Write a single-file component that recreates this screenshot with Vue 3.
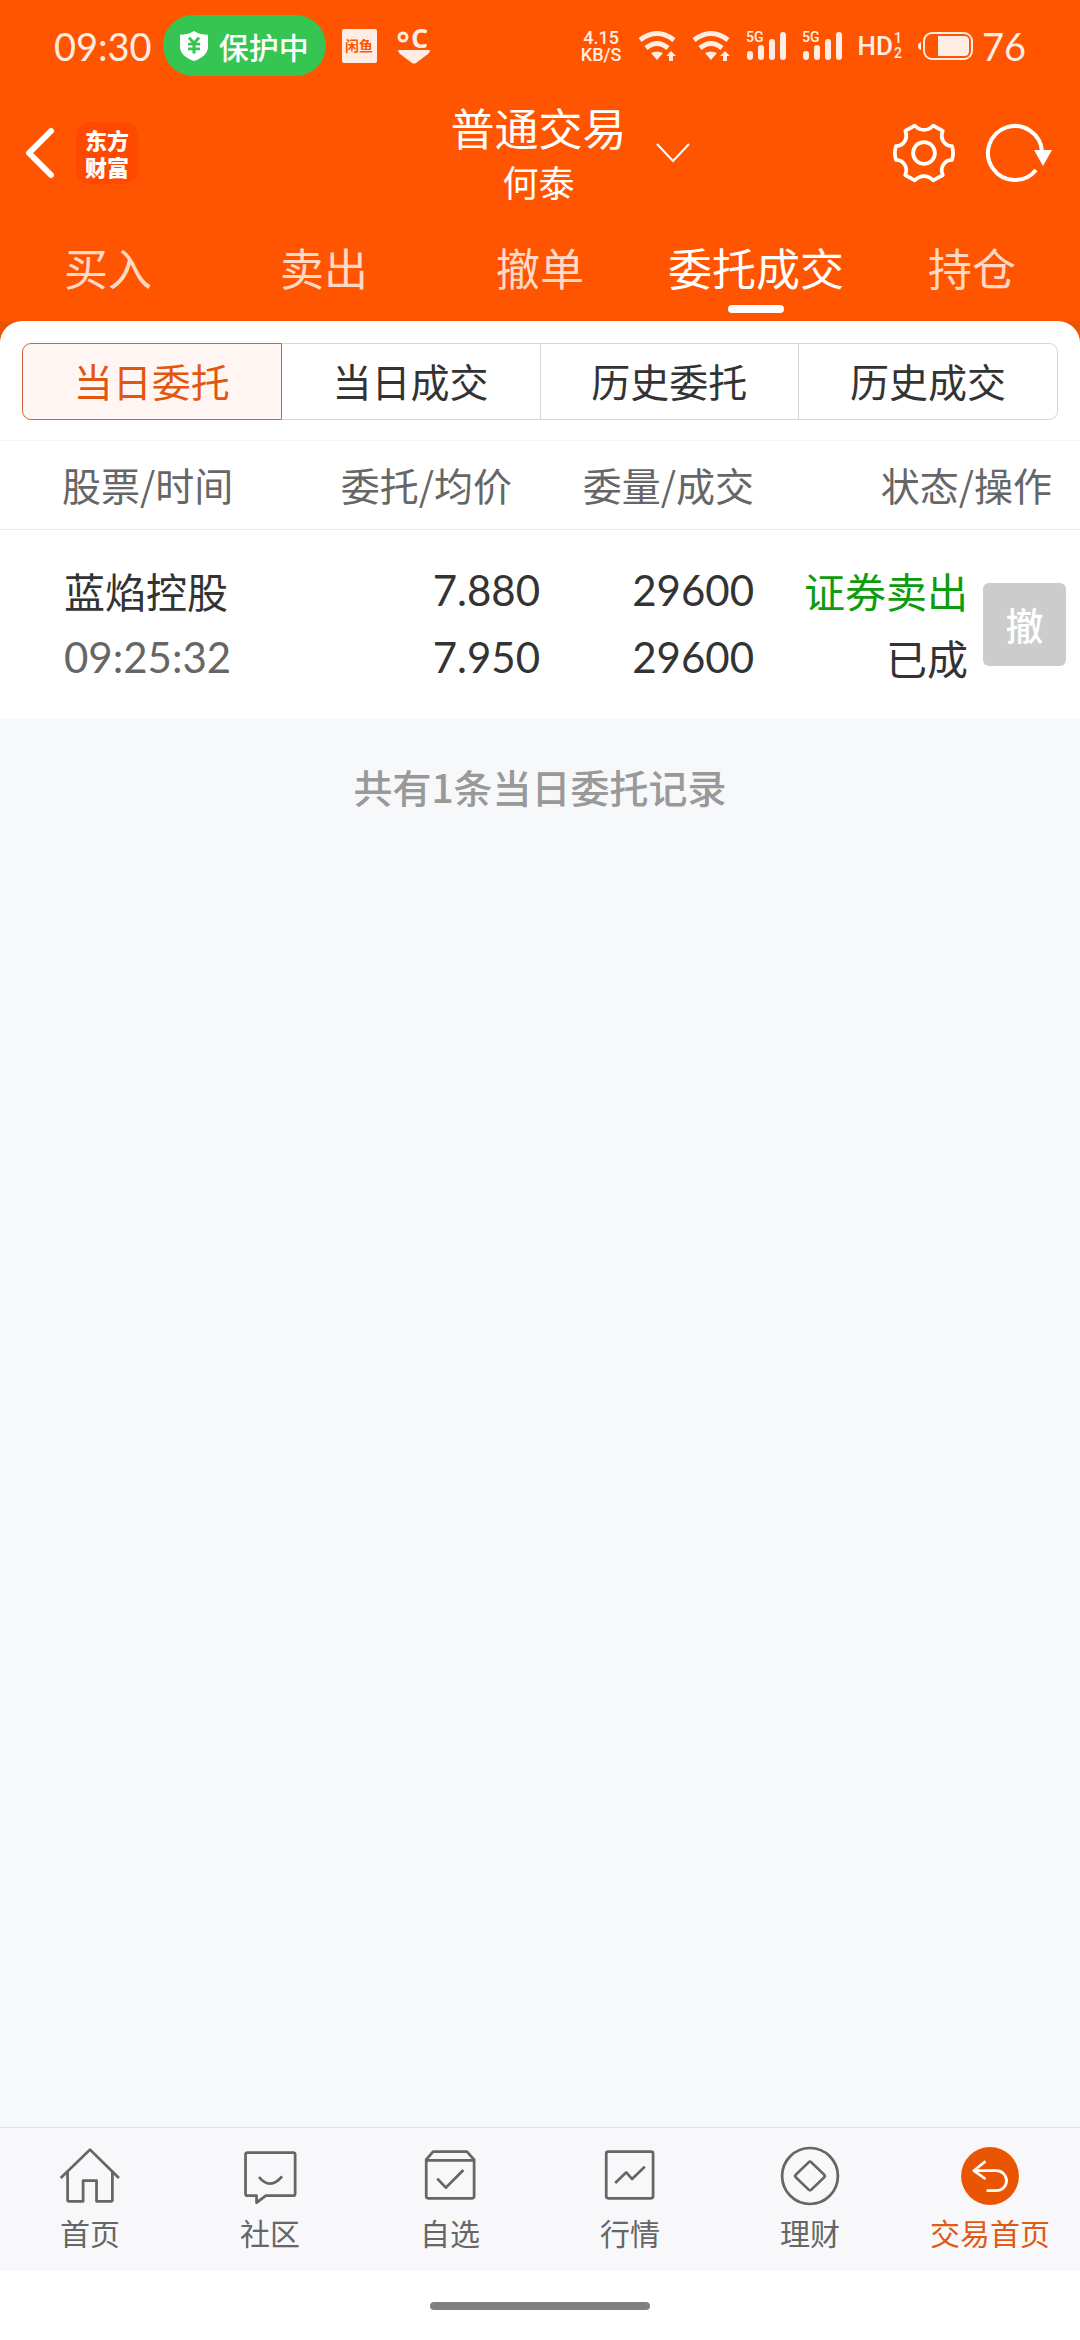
<script setup>
import { ref } from 'vue'

const tabs = ['买入', '卖出', '撤单', '委托成交', '持仓']
const activeTab = ref('委托成交')

const segments = ['当日委托', '当日成交', '历史委托', '历史成交']
const activeSegment = ref('当日委托')

const orders = ref([
  {
    id: 1,
    name: '蓝焰控股',
    time: '09:25:32',
    price: '7.880',
    avgPrice: '7.950',
    amount: '29600',
    dealt: '29600',
    side: '证券卖出',
    status: '已成'
  }
])

const navItems = [
  { label: '首页', icon: 'home' },
  { label: '社区', icon: 'community' },
  { label: '自选', icon: 'watchlist' },
  { label: '行情', icon: 'market' },
  { label: '理财', icon: 'wealth' },
  { label: '交易首页', icon: 'trade' }
]
const activeNav = ref('trade')
</script>

<template>
  <div class="page">
    <header class="header">
      <div class="status-bar">
        <div class="status-left">
          <span class="clock">09:30</span>
          <span class="shield-pill">
            <svg width="28" height="30" viewBox="0 0 28 32" preserveAspectRatio="none">
              <path d="M14 0C10 3 5 4 0 4V17C0 24 6 29 14 32C22 29 28 24 28 17V4C23 4 18 3 14 0Z" fill="#fff" />
              <path d="M9 7L14 13L19 7M14 13V24M8 14H20M8 19H20" fill="none" stroke="#36c552" stroke-width="3" />
            </svg>
            保护中
          </span>
          <svg class="fish-icon" width="35" height="34" viewBox="0 0 35 34">
            <rect width="35" height="34" rx="2" fill="#ffede4" />
            <text x="17" y="22" text-anchor="middle" font-size="14" font-weight="700" fill="#f50">闲鱼</text>
          </svg>
          <svg width="34" height="36" viewBox="0 0 34 36">
            <circle cx="6" cy="9" r="4" fill="none" stroke="#ffede4" stroke-width="3" />
            <text x="14" y="20" class="degree" font-size="27" font-weight="700" fill="#ffede4">C</text>
            <path d="M1 22H33Q33 24 31 26L19 35Q17 36 15 35L3 26Q1 24 1 22Z" fill="#ffede4" />
          </svg>
        </div>
        <div class="status-right">
          <span class="speed">4.15<br>KB/S</span>
          <svg v-for="n in 2" :key="'wifi' + n" width="38" height="30" viewBox="0 0 38 30">
            <path d="M2 9Q19 -4 36 9" fill="none" stroke="#ffede4" stroke-width="5" />
            <path d="M8 17Q19 8 30 17" fill="none" stroke="#ffede4" stroke-width="5" />
            <path d="M13 22Q19 19 25 22L19 29Z" fill="#ffede4" />
            <path d="M33 20L38 25H35V30H31V25H28Z" fill="#ffede4" />
          </svg>
          <svg v-for="n in 2" :key="'signal' + n" width="40" height="30" viewBox="0 0 40 30">
            <text x="0" y="11" class="five-g" font-size="14" fill="#ffede4">5G</text>
            <path d="M4 23V26M15 17V26M26 11V26M37 4V26" stroke="#ffede4" stroke-width="6" stroke-linecap="round" />
          </svg>
          <span class="hd">HD<span class="hd-sim"><i>1</i><i>2</i></span></span>
          <span class="battery">
            <svg width="56" height="28" viewBox="0 0 56 28">
              <rect x="6" y="1" width="48" height="26" rx="8" fill="none" stroke="#ffede4" stroke-width="2" />
              <path d="M20 4H46Q51 4 51 9V19Q51 24 46 24H20Z" fill="#ffede4" />
              <path d="M3 10V18Q0 17 0 14Q0 11 3 10Z" fill="#ffede4" />
            </svg>
            76
          </span>
        </div>
      </div>

      <div class="title-bar">
        <div class="title-left">
          <button class="icon-btn" aria-label="返回">
            <svg width="30" height="50" viewBox="0 0 30 50">
              <path d="M26 3L4 25L26 47" fill="none" stroke="#fff" stroke-width="6" stroke-linecap="round" stroke-linejoin="round" />
            </svg>
          </button>
          <span class="app-logo">东方<br>财富</span>
        </div>
        <button class="account">
          <span class="account-text">
            <span class="account-type">普通交易</span>
            <span class="account-name">何泰</span>
          </span>
          <svg width="34" height="20" viewBox="0 0 34 20">
            <path d="M1 1L17 18L33 1" fill="none" stroke="#fff" stroke-width="2" />
          </svg>
        </button>
        <div class="title-right">
          <button class="icon-btn" aria-label="设置">
            <svg width="62" height="60" viewBox="0 0 182 182" preserveAspectRatio="none" fill="none" stroke="#fff" stroke-width="11" stroke-linejoin="round">
              <path d="M64 8Q76 21 91 21Q106 21 118 8L146 24Q139 42 148 56Q156 69 173 70Q180 91 173 112Q156 113 148 126Q139 140 146 158L118 174Q106 161 91 161Q76 161 64 174L36 158Q43 140 34 126Q26 113 9 112Q2 91 9 70Q26 69 34 56Q43 42 36 24Z" />
              <ellipse cx="91" cy="91" rx="32" ry="33" />
            </svg>
          </button>
          <button class="icon-btn" aria-label="刷新">
            <svg width="66" height="60" viewBox="0 0 66 60">
              <path d="M50 47A27 27 0 1 1 56 29" fill="none" stroke="#fff" stroke-width="4" />
              <path d="M48 27H66L57 43Z" fill="#fff" />
            </svg>
          </button>
        </div>
      </div>

      <nav class="tabs">
        <button
          v-for="tab in tabs"
          :key="tab"
          class="tab"
          :class="{ active: tab === activeTab }"
          @click="activeTab = tab"
        >
          {{ tab }}
        </button>
      </nav>
    </header>

    <main class="content">
      <div class="panel-wrap">
        <div class="panel">
          <div class="segments">
            <button
              v-for="segment in segments"
              :key="segment"
              class="segment"
              :class="{ active: segment === activeSegment }"
              @click="activeSegment = segment"
            >
              {{ segment }}
            </button>
          </div>

          <table class="orders">
            <thead>
              <tr>
                <th class="col-name">股票/时间</th>
                <th class="col-price">委托/均价</th>
                <th class="col-amount">委量/成交</th>
                <th class="col-status">状态/操作</th>
              </tr>
            </thead>
            <tbody>
              <tr v-for="order in orders" :key="order.id">
                <td class="col-name">
                  <div>{{ order.name }}</div>
                  <div class="num time">{{ order.time }}</div>
                </td>
                <td>
                  <div class="num">{{ order.price }}</div>
                  <div class="num">{{ order.avgPrice }}</div>
                </td>
                <td class="col-amount">
                  <div class="num">{{ order.amount }}</div>
                  <div class="num">{{ order.dealt }}</div>
                </td>
                <td class="col-action">
                  <div class="status-cell">
                    <div>
                      <div class="sell">{{ order.side }}</div>
                      <div>{{ order.status }}</div>
                    </div>
                    <button class="cancel-btn" disabled>撤</button>
                  </div>
                </td>
              </tr>
            </tbody>
          </table>
        </div>
      </div>
      <p class="summary">共有{{ orders.length }}条当日委托记录</p>
    </main>

    <nav class="bottom-nav">
      <a
        v-for="item in navItems"
        :key="item.icon"
        href="#"
        class="nav-item"
        :class="{ active: item.icon === activeNav }"
        @click.prevent="activeNav = item.icon"
      >
        <svg class="nav-icon" viewBox="0 0 180 180" preserveAspectRatio="none">
          <template v-if="item.icon === 'home'">
            <path d="M5 96L90 11L174 96" />
            <path d="M25 78V162Q25 166 29 166H70V104H109V166H151Q155 166 155 162V78" />
          </template>
          <template v-else-if="item.icon === 'community'">
            <path d="M51 149H25Q19 149 19 143V26Q19 20 25 20H157Q163 20 163 26V143Q163 149 157 149H78L51 170Z" />
            <path d="M58 93Q90 134 125 91" />
          </template>
          <template v-else-if="item.icon === 'watchlist'">
            <path d="M21 41L41 17H139L160 41V151Q160 157 154 157H27Q21 157 21 151ZM21 43H160" />
            <path d="M53 98L78 125L129 72" />
          </template>
          <template v-else-if="item.icon === 'market'">
            <rect x="21" y="17" width="136" height="140" rx="6" />
            <path d="M47 111L79 79L96 99L133 62" />
          </template>
          <template v-else-if="item.icon === 'wealth'">
            <ellipse cx="90" cy="90" rx="81" ry="84" />
            <path d="M86 49Q90 45 94 49L131 86Q135 90 131 94L94 131Q90 135 86 131L49 94Q45 90 49 86Z" />
          </template>
          <template v-else>
            <ellipse class="disc" cx="90" cy="90" rx="84" ry="87" />
            <path class="arrow" d="M77 46L43 74L77 99M43 74H108A30 30 0 0 1 108 134H80" />
          </template>
        </svg>
        <span>{{ item.label }}</span>
      </a>
    </nav>
    <div class="home-indicator"></div>
  </div>
</template>

<style>
body {
  margin: 0;
}
</style>

<style scoped>
.page {
  min-height: 100vh;
  display: flex;
  flex-direction: column;
  background-color: #f7f8fa;
  color: #333;
  font-family: "Noto Sans CJK SC", sans-serif;
}

button {
  padding: 0;
  border: none;
  background: none;
  color: inherit;
  font-family: inherit;
  cursor: pointer;
}

svg {
  display: block;
  flex-shrink: 0;
  overflow: visible;
}

.header {
  background-color: #f50;
  color: #fff;
}

.status-bar {
  height: 91px;
  padding: 0 54px;
  display: flex;
  align-items: center;
  justify-content: space-between;
  color: #ffede4;
}

.status-left,
.status-right {
  display: flex;
  align-items: center;
}

.status-right {
  gap: 16px;
}

.clock {
  font-family: Lato, sans-serif;
  font-size: 38px;
  line-height: 60px;
}

.shield-pill {
  height: 61px;
  padding: 0 17px;
  margin: 0 16px 0 11px;
  display: flex;
  align-items: center;
  gap: 11px;
  border-radius: 32px;
  background-color: #36c552;
  color: #fff;
  font-size: 30px;
  font-weight: 500;
  line-height: 60px;
}

.fish-icon {
  margin-right: 20px;
}

.degree {
  font-family: "Open Sans", sans-serif;
}

.speed {
  font-family: Roboto, sans-serif;
  font-size: 18px;
  font-weight: 500;
  line-height: 17px;
  text-align: center;
}

.five-g {
  font-family: Roboto, sans-serif;
  font-weight: 500;
}

.hd {
  display: flex;
  align-items: center;
  gap: 1px;
  font-family: Roboto, sans-serif;
  font-size: 26px;
  font-weight: 500;
  line-height: 30px;
}

.hd-sim {
  display: flex;
  flex-direction: column;
  font-size: 14px;
  line-height: 15px;
}

.hd-sim i {
  font-style: normal;
}

.battery {
  display: flex;
  align-items: center;
  gap: 8px;
  font-family: Lato, sans-serif;
  font-size: 38px;
  line-height: 60px;
}

.title-bar {
  height: 124px;
  padding: 0 28px 0 25px;
  display: grid;
  grid-template-columns: 1fr auto 1fr;
  align-items: center;
}

.title-left,
.title-right {
  display: flex;
  align-items: center;
}

.title-left {
  gap: 21px;
}

.title-right {
  justify-content: flex-end;
  gap: 31px;
}

.app-logo {
  width: 62px;
  height: 62px;
  display: flex;
  align-items: center;
  justify-content: center;
  border-radius: 14px;
  background-color: #ff4800;
  font-size: 22px;
  font-weight: 900;
  line-height: 27px;
}

.account {
  display: grid;
  grid-template-columns: 34px auto 34px;
  align-items: center;
  gap: 29px;
}

.account-text {
  grid-column: 2;
  display: flex;
  flex-direction: column;
}

.account-type {
  font-size: 44px;
  line-height: 56px;
}

.account-name {
  font-size: 36px;
  line-height: 52px;
}

.tabs {
  height: 106px;
  display: flex;
}

.tab {
  flex: 1;
  display: flex;
  flex-direction: column;
  align-items: center;
  padding-top: 20px;
  font-size: 44px;
  line-height: 64px;
  color: #ffd9c6;
}

.tab.active {
  color: #fff;
}

.tab.active::after {
  content: "";
  width: 56px;
  height: 8px;
  margin-top: 6px;
  border-radius: 4px;
  background-color: #fff;
}

.content {
  flex: 1;
}

.panel-wrap {
  background-color: #e95504;
}

.panel {
  border-radius: 22px 22px 0 0;
  background-color: #fff;
}

.segments {
  display: flex;
  padding: 22px 22px 20px;
}

.segment {
  flex: 1;
  height: 77px;
  padding-bottom: 4px;
  border: 1px solid #d4d6d8;
  border-left-width: 0;
  font-size: 39px;
  line-height: 60px;
}

.segment:first-child {
  border-left-width: 1px;
  border-radius: 9px 0 0 9px;
}

.segment:last-child {
  border-radius: 0 9px 9px 0;
}

.segment.active {
  border-color: #c9673d;
  background-color: #fff6f3;
  color: #e2570f;
}

.orders {
  width: 100%;
  table-layout: fixed;
  border-collapse: collapse;
}

.orders th,
.orders td {
  box-sizing: border-box;
  text-align: right;
}

.orders th {
  width: 25%;
  height: 89px;
  padding: 0 0 2px;
  border-top: 1px solid #f5f5f5;
  border-bottom: 1px solid #ebebeb;
  color: #666;
  font-size: 39px;
  font-weight: 400;
  line-height: 60px;
}

.orders td {
  padding: 27px 0 28px;
  font-size: 41px;
  line-height: 67px;
}

.orders th.col-name {
  padding-left: 62px;
  text-align: left;
}

.orders td.col-name {
  padding-left: 64px;
  text-align: left;
}

.orders th.col-price {
  padding-right: 28px;
}

.orders th.col-amount {
  width: 20%;
}

.orders th.col-amount,
.orders td.col-amount {
  padding-right: 2px;
}

.orders th.col-status {
  width: 30%;
  padding-right: 28px;
}

.orders td.col-action {
  padding-right: 14px;
}

.orders .num {
  font-family: Lato, sans-serif;
  font-size: 42px;
}

.time {
  color: #666;
}

.sell {
  color: #0c9c0c;
}

.status-cell {
  display: flex;
  align-items: center;
  justify-content: flex-end;
  gap: 15px;
}

.cancel-btn {
  width: 83px;
  height: 83px;
  border-radius: 6px;
  background-color: #ccc;
  color: #fff;
  font-size: 38px;
  font-weight: 500;
  line-height: 60px;
}

.summary {
  margin: 0;
  padding-top: 37px;
  color: #999;
  font-size: 39px;
  font-weight: 500;
  line-height: 60px;
  text-align: center;
}

.bottom-nav {
  display: flex;
  padding: 18px 0 19px;
  border-top: 1px solid #e3e3e5;
  background-color: #f8f8fb;
}

.nav-item {
  flex: 1;
  display: flex;
  flex-direction: column;
  align-items: center;
  gap: 6px;
  color: #666;
  font-size: 30px;
  line-height: 40px;
  text-decoration: none;
}

.nav-item.active {
  color: #e05a14;
}

.nav-icon {
  width: 62px;
  height: 60px;
  fill: none;
  stroke: #666;
  stroke-width: 8;
  stroke-linejoin: round;
}

.nav-icon .disc {
  fill: #ea5504;
  stroke: none;
}

.nav-icon .arrow {
  stroke: #fff;
}

.home-indicator {
  height: 69px;
  display: flex;
  align-items: center;
  justify-content: center;
  background-color: #fff;
}

.home-indicator::after {
  content: "";
  width: 220px;
  height: 8px;
  border-radius: 4px;
  background-color: #808080;
}
</style>
